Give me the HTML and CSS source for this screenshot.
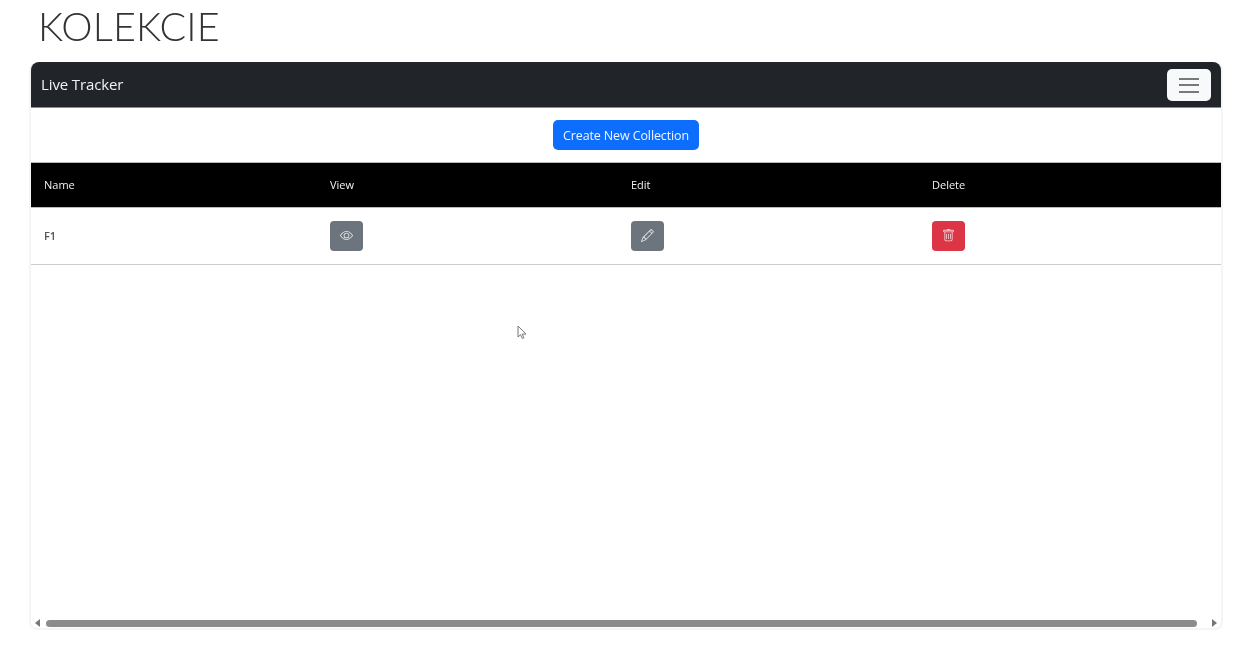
FILE: index.html
```html
<!DOCTYPE html>
<html lang="pl">
<head>
<meta charset="utf-8">
<title>Kolekcie</title>
<link rel="stylesheet" href="styles.css">
</head>
<body>
<h1 class="page-title">KOLEKCIE</h1>
<main class="frame">
  <nav class="navbar">
    <span class="brand">Live Tracker</span>
    <button class="toggler" aria-label="Menu"><span class="bar"></span><span class="bar"></span><span class="bar"></span></button>
  </nav>
  <div class="actions"><button class="btn-primary">Create New Collection</button></div>
  <table class="table">
    <colgroup><col class="col-name"><col class="col-view"><col class="col-edit"><col></colgroup>
    <thead>
      <tr><th>Name</th><th>View</th><th>Edit</th><th>Delete</th></tr>
    </thead>
    <tbody>
      <tr>
        <td>F1</td>
        <td><button class="icon-btn grey" aria-label="View">
          <svg width="14" height="14" viewBox="0 0 16 16" fill="currentColor"><path d="M16 8s-3-5.500-8-5.500S0 8 0 8s3 5.500 8 5.500S16 8 16 8zM1.200 8a13 13 0 0 1 1.700-2.100C4.200 4.600 5.900 3.500 8 3.500s3.800 1.100 5.100 2.400A13 13 0 0 1 14.800 8a13 13 0 0 1-1.700 2.100C11.800 11.400 10.100 12.500 8 12.500s-3.800-1.100-5.100-2.400A13 13 0 0 1 1.200 8z"/><path d="M8 5.500a2.500 2.500 0 1 0 0 5 2.500 2.500 0 0 0 0-5zM4.500 8a3.500 3.500 0 1 1 7 0 3.500 3.500 0 0 1-7 0z"/></svg>
        </button></td>
        <td><button class="icon-btn grey" aria-label="Edit">
          <svg width="14" height="14" viewBox="0 0 16 16" fill="currentColor"><path d="M12.100.100a.5.500 0 0 1 .7 0l3 3a.5.500 0 0 1 0 .7l-10 10a.5.500 0 0 1-.2.100l-5 2a.5.500 0 0 1-.6-.6l2-5a.5.500 0 0 1 .1-.2l10-10zM11.200 2.500 13.500 4.800 14.800 3.500 12.500 1.200zM12.800 5.500 10.500 3.200 4 9.700V10h.5a.5.500 0 0 1 .5.500V11h.5a.5.500 0 0 1 .5.500V12h.3zM3 10.700l-.1.100-1.500 3.800 3.800-1.500.1-.1A.5.500 0 0 1 5 12.500V12h-.5a.5.500 0 0 1-.5-.5V11h-.5a.5.500 0 0 1-.5-.3z"/></svg>
        </button></td>
        <td><button class="icon-btn red" aria-label="Delete">
          <svg width="14" height="14" viewBox="0 0 16 16" fill="currentColor"><path d="M5.500 5.500A.5.500 0 0 1 6 6v6a.5.500 0 0 1-1 0V6a.5.500 0 0 1 .5-.5zm2.500 0a.5.500 0 0 1 .5.500v6a.5.500 0 0 1-1 0V6a.5.500 0 0 1 .5-.5zm3 .500a.5.500 0 0 0-1 0v6a.5.500 0 0 0 1 0V6z"/><path d="M14.500 3a1 1 0 0 1-1 1H13v9a2 2 0 0 1-2 2H5a2 2 0 0 1-2-2V4h-.5a1 1 0 0 1-1-1V2a1 1 0 0 1 1-1H6a1 1 0 0 1 1-1h2a1 1 0 0 1 1 1h3.500a1 1 0 0 1 1 1v1zM4.100 4 4 4.100V13a1 1 0 0 0 1 1h6a1 1 0 0 0 1-1V4.100L11.900 4H4.100zM2.500 3h11V2h-11v1z"/></svg>
        </button></td>
      </tr>
    </tbody>
  </table>
  <svg class="cursor" width="10" height="15" viewBox="0 0 10 15"><path d="M1 1v11l2.600-2.300 1.700 3.800 1.600-.7-1.700-3.700H9z" fill="#fff" stroke="#777" stroke-width="1"/></svg>
  <div class="scrollbar">
    <span class="arrow arrow-left"></span>
    <span class="thumb"></span>
    <span class="arrow arrow-right"></span>
  </div>
</main>
</body>
</html>
```
FILE: styles.css
```css
* { box-sizing: border-box; }
html, body { height: 100%; }
body {
  margin: 0;
  background: #fff;
  font-family: "Open Sans", "Noto Sans", sans-serif;
  overflow: hidden;
  padding: 0 22px 0 29px;
}
.page-title {
  margin: 0;
  height: 62px;
  padding: 2px 0 0 9px;
  font-family: Lato, sans-serif;
  font-weight: 300;
  font-size: 39.500px;
  letter-spacing: .2px;
  line-height: 47px;
  color: #333;
  filter: blur(.3px);
}
.frame {
  position: relative;
  height: 568px;
  display: flex;
  flex-direction: column;
  border: solid #f5f5f5;
  border-width: 0 2px 2px 2px;
  border-radius: 8px;
  filter: blur(.3px);
}
.navbar {
  height: 46px;
  flex: none;
  padding: 0 10px;
  display: flex;
  align-items: center;
  justify-content: space-between;
  background: #212529;
  border-bottom: 1px solid #8c8f91;
  border-radius: 8px 8px 0 0;
}
.brand {
  color: #f2f2f2;
  font-size: 15px;
  letter-spacing: -.12px;
  margin-bottom: 2px;
}
.toggler {
  width: 44px;
  height: 32px;
  margin-top: 1px;
  padding: 0;
  border: 0;
  border-radius: 5px;
  background: #f8f9fa;
  display: flex;
  flex-direction: column;
  align-items: center;
  justify-content: center;
  gap: 4.500px;
}
.bar {
  width: 20px;
  height: 2px;
  background: #77797b;
}
.actions {
  height: 54px;
  flex: none;
  display: flex;
  justify-content: center;
  padding-top: 12px;
}
.btn-primary {
  width: 146px;
  height: 30px;
  padding: 0;
  border: 0;
  border-radius: 5px;
  background: #0d6efd;
  color: #f0f6ff;
  font: 12.500px "Open Sans", sans-serif;
  letter-spacing: -.12px;
}
.table {
  width: 100%;
  flex: none;
  border-collapse: collapse;
  table-layout: fixed;
  font-size: 11px;
}
.col-name { width: 286px; }
.col-view { width: 301px; }
.col-edit { width: 301px; }
thead tr {
  height: 45px;
  background: #000;
  color: #f2f2f2;
}
th {
  padding: 0 13px 2px;
  text-align: left;
  font-weight: 500;
  border-top: 1px solid #bbb;
  border-bottom: 1px solid #bbb;
}
tbody tr { height: 57px; }
td {
  padding: 0 13px 1px;
  color: #555;
  font-weight: 600;
  border-bottom: 1px solid #ccc;
}
.icon-btn {
  width: 33.500px;
  height: 30px;
  margin-left: -.5px;
  padding: 0;
  border: 0;
  border-radius: 4px;
  display: flex;
  align-items: center;
  justify-content: center;
  color: #e4e6e8;
}
.icon-btn svg { width: 13px; height: 13px; }
.grey { background: #6c757d; }
.red { background: #dc3545; color: #f6d5d8; }
.cursor {
  position: absolute;
  left: 486px;
  top: 263px;
}
.scrollbar {
  margin-top: auto;
  height: 10px;
  flex: none;
  display: flex;
  align-items: center;
  padding: 0 3px 0 4px;
}
.thumb {
  width: 1151px;
  height: 7px;
  margin: 0 15px 0 6px;
  border-radius: 4px;
  background: #8c8c8c;
}
.arrow {
  width: 0;
  height: 0;
  border-top: 4px solid transparent;
  border-bottom: 4px solid transparent;
}
.arrow-left { border-right: 5px solid #777; }
.arrow-right { border-left: 5px solid #777; }
```
